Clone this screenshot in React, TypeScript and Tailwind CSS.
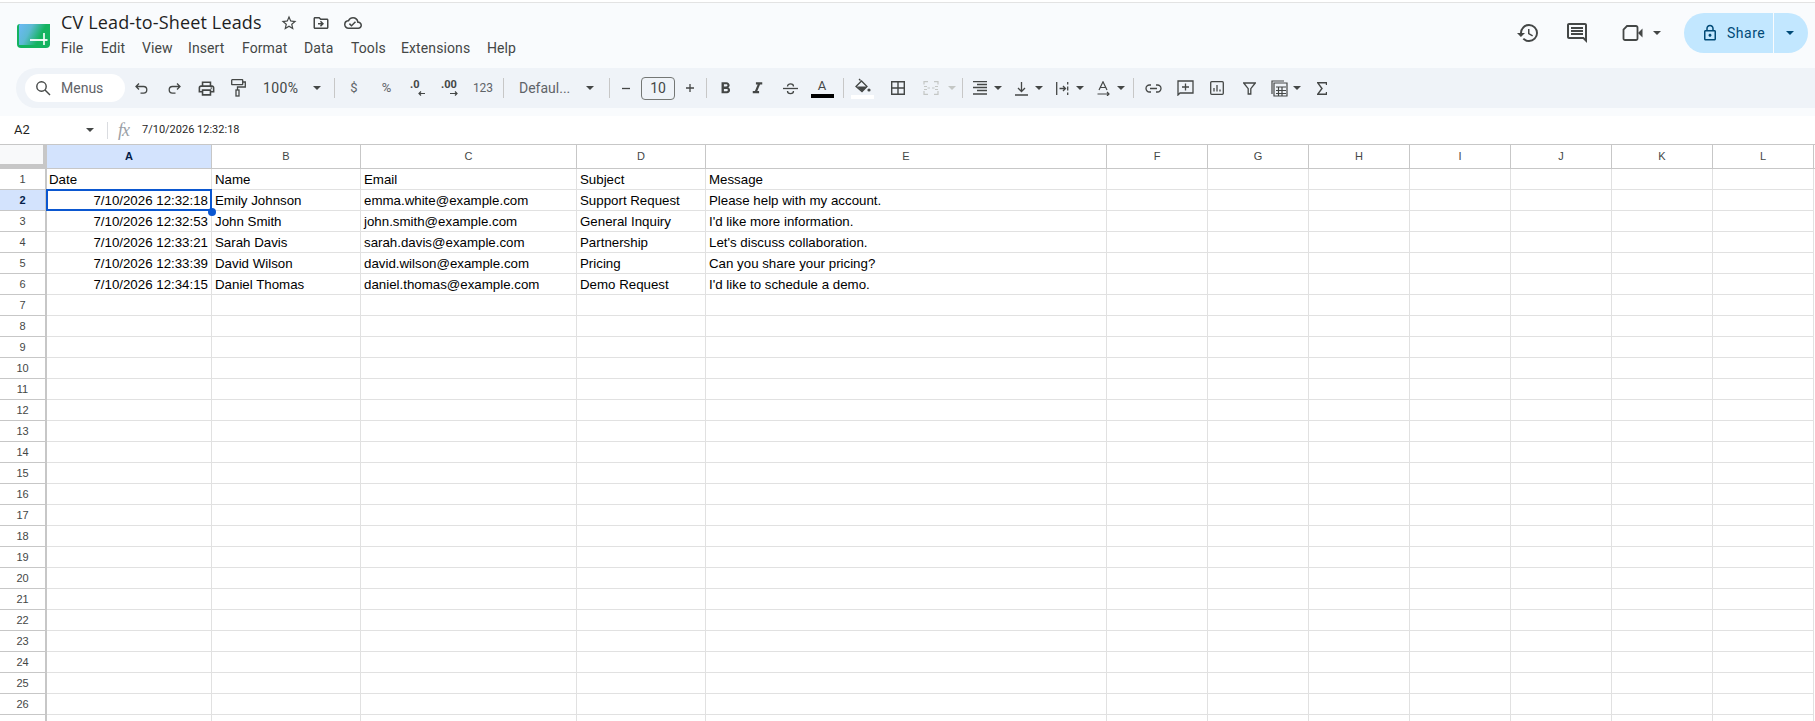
import React from "react";
import {
  MdHistory, MdOutlineComment, MdStarBorder, MdOutlineDriveFileMove, MdOutlineCloudDone,
  MdFormatBold, MdFormatItalic, MdOutlineLocalPrintshop, MdOutlineLock,
} from "react-icons/md";

const sans = "[font-family:Roboto,'Liberation_Sans',sans-serif]";

const Caret = ({ color = "#444746", w = 8 }: { color?: string; w?: number }) => (
  <svg width={w} height={w / 2} viewBox="0 0 8 4"><path d="M0 0h8L4 4z" fill={color} /></svg>
);

const S = ({ children, w = 18, h, sw = 1.3, color = "#444746" }: { children: React.ReactNode; w?: number; h?: number; sw?: number; color?: string }) => (
  <svg width={w} height={h ?? w} viewBox={`0 0 ${w} ${h ?? w}`} fill="none" stroke={color} strokeWidth={sw}>{children}</svg>
);

const Cell = ({ children, cls = "w-8" }: { children: React.ReactNode; cls?: string }) => (
  <div className={`flex h-full items-center justify-center ${cls}`}>{children}</div>
);

const Sep = ({ cls }: { cls: string }) => <div className={`h-5 w-px shrink-0 bg-[#c7c7c7] ${cls}`} />;

const DD = ({ children }: { children: React.ReactNode }) => (
  <div className="flex h-full w-[41px] shrink-0 items-center">
    <div className="flex w-8 shrink-0 justify-center">{children}</div>
    <div className="-ml-[2px] flex w-2 shrink-0"><Caret /></div>
  </div>
);

const cols = [
  { l: "A", w: "w-[165px]" }, { l: "B", w: "w-[149px]" }, { l: "C", w: "w-[216px]" }, { l: "D", w: "w-[129px]" },
  { l: "E", w: "w-[401px]" }, { l: "F", w: "w-[101px]" }, { l: "G", w: "w-[101px]" }, { l: "H", w: "w-[101px]" },
  { l: "I", w: "w-[101px]" }, { l: "J", w: "w-[101px]" }, { l: "K", w: "w-[101px]" }, { l: "L", w: "w-[101px]" },
];

const data: string[][] = [
  ["Date", "Name", "Email", "Subject", "Message"],
  ["7/10/2026 12:32:18", "Emily Johnson", "emma.white@example.com", "Support Request", "Please help with my account."],
  ["7/10/2026 12:32:53", "John Smith", "john.smith@example.com", "General Inquiry", "I'd like more information."],
  ["7/10/2026 12:33:21", "Sarah Davis", "sarah.davis@example.com", "Partnership", "Let's discuss collaboration."],
  ["7/10/2026 12:33:39", "David Wilson", "david.wilson@example.com", "Pricing", "Can you share your pricing?"],
  ["7/10/2026 12:34:15", "Daniel Thomas", "daniel.thomas@example.com", "Demo Request", "I'd like to schedule a demo."],
];

const menu: [string, string][] = [
  ["File", "w-[40px]"], ["Edit", "w-[41px]"], ["View", "w-[46px]"], ["Insert", "w-[54px]"], ["Format", "w-[62px]"],
  ["Data", "w-[47px]"], ["Tools", "w-[50px]"], ["Extensions", "w-[86px]"], ["Help", "w-[40px]"],
];

export default function App() {
  const rows = Array.from({ length: 27 }, (_, i) => i);
  return (
    <div className={`h-[721px] w-[1815px] overflow-hidden bg-white ${sans}`}>
      <div className="h-[2px] bg-white" />
      {/* title area */}
      <div className="h-[114px] border-t border-[#e3e3e3] bg-[#f9fbfd]">
        <div className="flex h-[65px]">
          <div className="ml-[17px] mt-[21px] h-[24px] w-[33px]">
            <svg width="33" height="24" viewBox="0 0 33 24">
              <defs>
                <linearGradient id="lg" x1="0" x2="1" y1="0.15" y2="0.5">
                  <stop offset="0" stopColor="#6ab9f2" />
                  <stop offset="0.35" stopColor="#5cbad2" />
                  <stop offset="0.75" stopColor="#14b35f" />
                </linearGradient>
              </defs>
              <path d="M3 0H33V20a4 4 0 0 1-4 4H4a4 4 0 0 1-4-4V3a3 3 0 0 1 3-3z" fill="#14b35f" />
              <path d="M3 0H33V21H2V1z" fill="url(#lg)" />
              <path d="M13 16h17.5" stroke="#fff" strokeWidth="1.8" />
              <path d="M27 9v12" stroke="#fff" strokeWidth="1.6" />
            </svg>
          </div>
          <div className="ml-[11px] flex flex-col">
            <div className="flex h-[32px] items-center pt-[7px]">
              <span className="w-[206px] whitespace-nowrap text-[18px] tracking-[0.15px] text-[#1f1f1f] [font-family:'Open_Sans',sans-serif]">CV Lead-to-Sheet Leads</span>
              <div className="ml-[13px] flex items-center gap-[14px] text-[#444746]">
                <MdStarBorder size={18} />
                <MdOutlineDriveFileMove size={18} />
                <MdOutlineCloudDone size={18} />
              </div>
            </div>
            <div className="mt-[2px] flex h-[22px] items-center text-[14px] tracking-[0.1px] text-[#444746]">
              {menu.map(([m, w]) => <span key={m} className={`${w} whitespace-nowrap`}>{m}</span>)}
            </div>
          </div>
          <div className="ml-auto mr-[7px] mt-[10px] flex h-[40px] items-center">
            <MdHistory size={24} className="mr-[25px] text-[#444746]" />
            <MdOutlineComment size={24} className="mr-[33px] text-[#444746]" />
            <svg className="mr-[10px]" width="21" height="16" viewBox="0 0 21 16" fill="none">
              <path d="M5 1h9a1.5 1.5 0 0 1 1.5 1.5v11A1.5 1.5 0 0 1 14 15H3a1.5 1.5 0 0 1-1.5-1.5V4.5z" stroke="#444746" strokeWidth="1.8" />
              <path d="M16 8l4.5-4.5v9z" fill="#444746" />
            </svg>
            <div className="mr-[23px]"><Caret /></div>
            <div className="flex h-[40px] w-[124px] items-center rounded-full bg-[#c2e7ff] text-[#004a77]">
              <MdOutlineLock size={18} className="ml-[17px]" />
              <span className="ml-[8px] w-[46px] text-[14px] font-normal tracking-[0.5px]">Share</span>
              <div className="h-full w-px bg-[#f9fbfd]" />
              <div className="flex flex-1 justify-center pr-[2px]"><Caret color="#004a77" /></div>
            </div>
          </div>
        </div>
        {/* toolbar */}
        <div className="ml-[16px] flex h-[40px] items-center rounded-l-[20px] bg-[#eff3f8] text-[#444746]">
          <div className="ml-[9px] mr-px flex h-[28px] w-[100px] items-center rounded-full bg-white">
            <svg className="ml-[10px]" width="16" height="16" viewBox="0 0 16 16" fill="none" stroke="#444746" strokeWidth="1.4"><circle cx="6.5" cy="6.5" r="4.7" /><path d="M10 10l5 5" /></svg>
            <span className="ml-[10px] text-[14px] text-[#5f6368]">Menus</span>
          </div>
          <Cell><S><path d="M6 4.5L3 7.5l3 3M3.2 7.5h7.3a3.3 3.3 0 0 1 0 6.6H7.5" /></S></Cell>
          <Cell><S><path d="M12 4.5l3 3-3 3M14.8 7.5H7.5a3.3 3.3 0 0 0 0 6.6h3" /></S></Cell>
          <Cell><MdOutlineLocalPrintshop size={19} /></Cell>
          <Cell>
            <S w={15} h={18} sw={1.3}>
              <rect x=".7" y=".7" width="11" height="5" rx=".5" />
              <path d="M11.7 3h2.6v5H6.5v3" />
              <rect x="5" y="11" width="3" height="6" />
            </S>
          </Cell>
          <div className="flex h-full w-[72px] shrink-0 items-center">
            <span className="ml-[9px] w-[50px] text-[14px] tracking-[0.4px]">100%</span>
            <Caret />
          </div>
          <Sep cls="ml-[8px] mr-[3px]" />
          <Cell><span className="text-[13px] text-[#5f6368]">$</span></Cell>
          <Cell cls="w-[33px]"><span className="text-[13px] text-[#5f6368]">%</span></Cell>
          <Cell>
            <svg width="20" height="18" viewBox="0 0 20 18"><text x="1" y="9" fontSize="11" fontWeight="700" fill="#444746" fontFamily="Roboto">.0</text><path d="M16 14.5H10M12 12.5l-2 2 2 2" fill="none" stroke="#444746" strokeWidth="1.2" /></svg>
          </Cell>
          <Cell>
            <svg width="20" height="18" viewBox="0 0 20 18"><text x="0" y="9" fontSize="11" fontWeight="700" fill="#444746" fontFamily="Roboto">.00</text><path d="M9 14.5h7M14 12.5l2 2-2 2" fill="none" stroke="#444746" strokeWidth="1.2" /></svg>
          </Cell>
          <Cell><span className="text-[12px] text-[#5f6368]">123</span></Cell>
          <Sep cls="ml-[4px] mr-[5px]" />
          <div className="flex h-full w-[95px] shrink-0 items-center">
            <span className="ml-[10px] w-[67px] text-[14px] text-[#5f6368]">Defaul...</span>
            <Caret />
          </div>
          <Sep cls="ml-[5px]" />
          <Cell><S><path d="M5 9.5h8" /></S></Cell>
          <div className="-ml-px flex h-[23px] w-[34px] items-center justify-center rounded-[4px] border border-[#747775] text-[14px]">10</div>
          <div className="-ml-px flex h-full w-8 items-center justify-center"><S><path d="M5 9h8M9 5v8" /></S></div>
          <Sep cls="" />
          <div className="w-[2px]" />
          <Cell><MdFormatBold size={19} /></Cell>
          <Cell><MdFormatItalic size={19} /></Cell>
          <Cell cls="ml-px w-8"><S w={17}><path d="M1 8.5h15" /><path d="M5.5 6.5c0-3.5 6-3.5 6 0M5.5 11c0 3.5 6 3.5 6 0" /></S></Cell>
          <div className="relative flex h-full w-8 shrink-0 flex-col items-center justify-center">
            <span className="text-[13px] leading-[14px]">A</span>
            <div className="mt-[1px] h-[4px] w-[23px] bg-black" />
          </div>
          <Sep cls="ml-[5px] mr-[2px]" />
          <div className="flex h-full w-8 shrink-0 flex-col items-center justify-center">
            <svg width="17" height="16" viewBox="0 0 17 16"><path d="M5 1l1.5 1.5M2 8.5L7.5 3l5.5 5.5-5 5z" fill="none" stroke="#444746" strokeWidth="1.3" /><path d="M3 8.5h10L8 13.5z" fill="#444746" /><circle cx="15" cy="12" r="1.6" fill="#444746" /></svg>
            <div className="mt-[1px] h-[4px] w-[23px] bg-white" />
          </div>
          <Cell cls="ml-[4px] w-8"><S w={14} sw={1.4}><path d="M.7.7h12.6v12.6H.7zM7 .7v12.6M.7 7h12.6" /></S></Cell>
          <div className="ml-[1px] flex h-full w-[46px] shrink-0 items-center">
            <div className="flex w-8 shrink-0 justify-center">
              <S w={16} h={14} color="#c4c7c5" sw={1.2}><path d="M5 .6H1v3M1 10v3.4h4M11 .6h4v3M15 10v3.4h-4M1 5.5h3M1 8.5h3M12 5.5h3M12 8.5h3M7 7H4.5M9 7h2.5" /></S>
            </div>
            <div className="ml-px flex w-2"><Caret color="#c4c7c5" /></div>
          </div>
          <Sep cls="ml-[1px] mr-[1px]" />
          <DD><S w={14} sw={1.3}><path d="M0 .7h14M4 3.5h10M0 6.5h14M4 9.5h10M0 13h14" /></S></DD>
          <DD><S w={13} h={15} sw={1.3}><path d="M6.5 1v9M3 7l3.5 3.5L10 7M0 14h13" /></S></DD>
          <DD><S w={13} h={15} sw={1.3}><path d="M.7 1v13M11.7 1v2.5M11.7 5.5v4M11.7 11.5V14M3.5 7.5h6M7 5l2.5 2.5L7 10" /></S></DD>
          <DD><S w={13} h={15} sw={1.2}><path d="M2 9L6 .8 10 9M3.3 6.5h5.4M.5 13h11M10 11l2 2-2 2" /></S></DD>
          <Sep cls="ml-[5px] mr-[3px]" />
          <Cell><S w={17} h={9} sw={1.3}><path d="M6 1H4.5a3.5 3.5 0 0 0 0 7H6M11 1h1.5a3.5 3.5 0 0 1 0 7H11M5 4.5h7" /></S></Cell>
          <Cell><S w={17} h={16} sw={1.3}><path d="M1 15V1h15v12H3zM8.5 3.5v7M5 7h7" /></S></Cell>
          <Cell><S w={14} sw={1.3}><path d="M.7 1.7a1 1 0 0 1 1-1h10.6a1 1 0 0 1 1 1v10.6a1 1 0 0 1-1 1H1.7a1 1 0 0 1-1-1zM4 10.5V7M7 10.5V4M10 10.5V8.5" /></S></Cell>
          <Cell><S w={13} sw={1.3}><path d="M.7 1h11.6L7.8 6.7V12h-2.6V6.7z" /></S></Cell>
          <div className="-ml-[2px] flex h-full w-[41px] shrink-0 items-center">
            <div className="flex w-8 shrink-0 justify-center"><S w={17} sw={1.2}><path d="M1 14V1h12M3 16V3h13v13zM5 7h10M5 10.5h10M5 13.5h10M7.5 7v9M11 7v9" /></S></div>
            <div className="-ml-[2px] flex w-2"><Caret /></div>
          </div>
          <Cell cls="ml-[2px] w-8"><S w={10} h={13} sw={1.4}><path d="M9.5 3V.8H.8L5 6.5.8 12.2H9.5V10" /></S></Cell>
        </div>
      </div>
      {/* formula bar */}
      <div className="flex h-[28px] items-center bg-white">
        <span className="ml-[14px] w-[72px] text-[13px] text-[#1f1f1f]">A2</span>
        <Caret />
        <div className="ml-[13px] h-[17px] w-px bg-[#dadce0]" />
        <span className="ml-[10px] w-[24px] text-[18px] italic leading-none tracking-[-1px] text-[#9aa0a6] [font-family:'Liberation_Serif',serif]">fx</span>
        <span className="text-[11px] text-[#1f1f1f]">7/10/2026 12:32:18</span>
      </div>
      {/* column header */}
      <div className="flex h-[25px] border-y border-[#c7c7c7] [font-family:'Liberation_Sans',sans-serif]">
        <div className="h-full w-[47px] shrink-0 border-r-[4px] border-r-[#c7c7c7] bg-[#f8f9fa] shadow-[inset_0_-4px_0_#c7c7c7]" />
        {cols.map((c, i) => (
          <div key={c.l} className={`flex h-full shrink-0 items-center justify-center border-r border-[#c7c7c7] text-[11px] ${c.w} ${i === 0 ? "bg-[#d3e3fd] font-bold text-[#041e49]" : "text-[#444746]"}`}>{c.l}</div>
        ))}
      </div>
      {/* body */}
      <div className="relative [font-family:'Liberation_Sans',sans-serif]">
        {rows.map((r) => (
          <div key={r} className="flex h-[21px]">
            <div className={`flex h-full w-[47px] shrink-0 items-center justify-center border-b border-r-[2px] border-[#c7c7c7] text-[11px] ${r === 1 ? "bg-[#d3e3fd] font-bold text-[#041e49]" : "text-[#444746]"}`}>{r + 1}</div>
            {cols.map((c, i) => (
              <div key={c.l} className={`flex h-full shrink-0 items-center overflow-hidden whitespace-nowrap border-b border-r border-[#e1e1e1] pr-[3px] pt-[2px] text-[13.3px] text-black ${i === 0 ? "pl-[2px]" : "pl-[3px]"} ${c.w} ${i === 0 && r > 0 && data[r] ? "justify-end" : ""}`}>
                {data[r]?.[i] ?? ""}
              </div>
            ))}
          </div>
        ))}
        <div className="absolute left-[46px] top-[20px] h-[22px] w-[166px] border-2 border-[#0b57d0]" />
        <div className="absolute left-[208px] top-[39px] h-[8px] w-[8px] rounded-full bg-[#0b57d0]" />
      </div>
    </div>
  );
}
